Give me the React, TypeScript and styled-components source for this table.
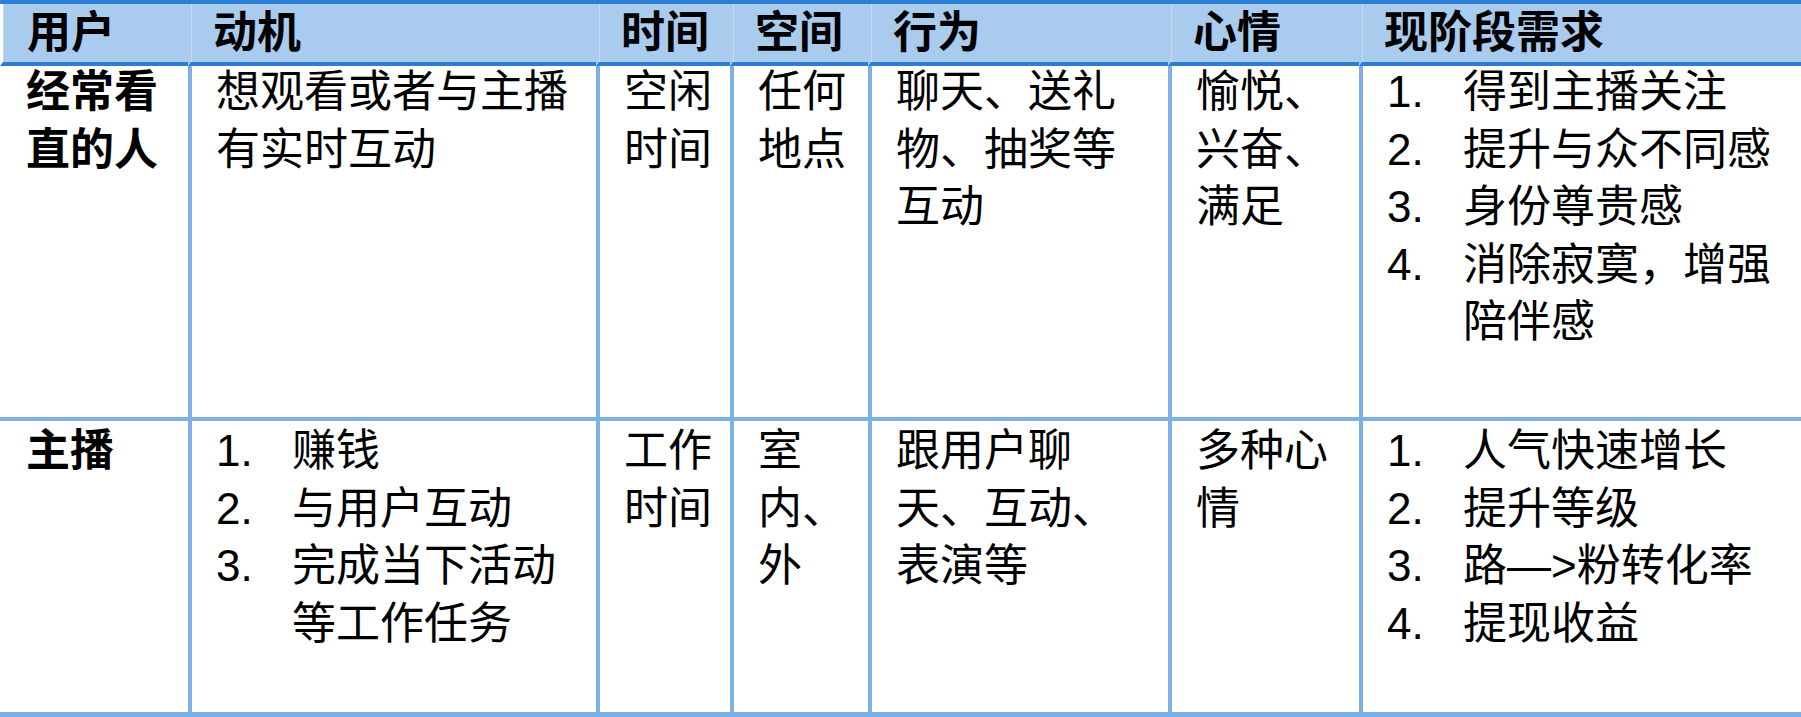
import styled, { createGlobalStyle } from "styled-components";

const GlobalStyle = createGlobalStyle`
  html, body {
    margin: 0;
    padding: 0;
    background: #fff;
  }
  body {
    font-family: "Liberation Sans", "Noto Sans CJK SC", sans-serif;
    color: #000;
  }
`;

const DARK = "#2e7dd5";
const FILL = "#a8cbee";
const RULE = "#7db0e6";

type Cell =
  | { kind: "text"; lines: string[] }
  | { kind: "list"; items: string[][] };

const text = (...lines: string[]): Cell => ({ kind: "text", lines });
const list = (...items: string[][]): Cell => ({ kind: "list", items });

const headers = ["用户", "动机", "时间", "空间", "行为", "心情", "现阶段需求"];

// shift = nudge of the first line against the rule above it
const rows: { shift: number; height: number; cells: Cell[] }[] = [
  {
    shift: -3,
    height: 355,
    cells: [
      text("经常看", "直的人"),
      text("想观看或者与主播", "有实时互动"),
      text("空闲", "时间"),
      text("任何", "地点"),
      text("聊天、送礼", "物、抽奖等", "互动"),
      text("愉悦、", "兴奋、", "满足"),
      list(["得到主播关注"], ["提升与众不同感"], ["身份尊贵感"], ["消除寂寞，增强", "陪伴感"]),
    ],
  },
  {
    shift: 1,
    height: 296,
    cells: [
      text("主播"),
      list(["赚钱"], ["与用户互动"], ["完成当下活动", "等工作任务"]),
      text("工作", "时间"),
      text("室", "内、", "外"),
      text("跟用户聊", "天、互动、", "表演等"),
      text("多种心", "情"),
      list(["人气快速增长"], ["提升等级"], ["路—>粉转化率"], ["提现收益"]),
    ],
  },
];

const Table = styled.div`
  width: 1801px;
  height: 717px;
  display: grid;
  grid-template-columns: 188px 408px 134px 138px 300px 191px 442px;
  grid-template-rows: 62px auto auto;
  border-top: 4px solid ${DARK};
  box-sizing: border-box;
  overflow: hidden;
`;

const HeadCell = styled.div<{ $first?: boolean }>`
  background: ${FILL};
  border-bottom: 4px solid ${DARK};
  border-left: ${(p) => (p.$first ? "3px solid #fff" : `3px solid ${FILL}`)};
  box-shadow: inset 1px 0 0 ${(p) => (p.$first ? "#c9d3de" : "#c4dcf4")};
  padding-left: ${(p) => (p.$first ? "24px" : "22px")};
  display: flex;
  align-items: center;
  font-size: 44px;
  font-weight: 700;
  line-height: 1;
  white-space: nowrap;
`;

const BodyCell = styled.div<{ $first?: boolean; $height: number; $last?: boolean }>`
  height: ${(p) => p.$height}px;
  box-sizing: border-box;
  border-left: ${(p) => (p.$first ? "none" : `4px solid ${RULE}`)};
  border-bottom: ${(p) => (p.$last ? "5px" : "4px")} solid ${RULE};
  padding-left: ${(p) => (p.$first ? "26px" : "24px")};
  font-size: 44px;
  font-weight: ${(p) => (p.$first ? 700 : 400)};
  line-height: 57.5px;
  white-space: nowrap;
  overflow: hidden;
`;

const Content = styled.div<{ $shift: number }>`
  margin-top: ${(p) => p.$shift}px;
`;

const Line = styled.div`
  margin: 0;
`;

const Item = styled.div`
  display: grid;
  grid-template-columns: 76px auto;
`;

const Marker = styled.span`
  font-family: "Liberation Sans", sans-serif;
`;

function CellContent({ cell }: { cell: Cell }) {
  if (cell.kind === "text") {
    return (
      <>
        {cell.lines.map((l, i) => (
          <Line key={i}>{l}</Line>
        ))}
      </>
    );
  }
  return (
    <>
      {cell.items.map((lines, i) => (
        <Item key={i}>
          <Marker>{i + 1}.</Marker>
          <div>
            {lines.map((l, j) => (
              <Line key={j}>{l}</Line>
            ))}
          </div>
        </Item>
      ))}
    </>
  );
}

export default function App() {
  return (
    <>
      <GlobalStyle />
      <Table>
        {headers.map((h, i) => (
          <HeadCell key={h} $first={i === 0}>
            {h}
          </HeadCell>
        ))}
        {rows.map((row, r) =>
          row.cells.map((cell, c) => (
            <BodyCell
              key={`${r}-${c}`}
              $first={c === 0}
              $height={row.height}
              $last={r === rows.length - 1}
            >
              <Content $shift={row.shift}>
                <CellContent cell={cell} />
              </Content>
            </BodyCell>
          ))
        )}
      </Table>
    </>
  );
}
